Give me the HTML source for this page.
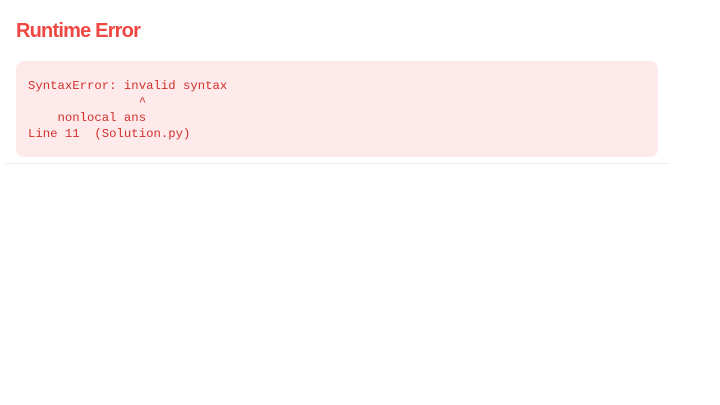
<!DOCTYPE html>
<html><head><style>
body{margin:0;background:#fff;width:720px;height:405px;overflow:hidden;font-family:"Liberation Sans",sans-serif}
h1{position:absolute;left:16px;top:20px;margin:0;font-size:20px;font-weight:bold;color:#ef4743;letter-spacing:-0.8px}
.box{position:absolute;left:16px;top:61px;width:642px;height:96px;background:#feeaea;border-radius:8px}
pre{position:absolute;left:28px;top:78px;margin:0;font-family:"Liberation Mono",monospace;font-size:12.3px;line-height:16px;color:#d0312d}
.hr{position:absolute;left:5px;top:163px;width:663px;height:1px;background:#ececec}
</style></head><body>
<h1>Runtime Error</h1>
<div class="box"></div>
<pre>SyntaxError: invalid syntax
               ^
    nonlocal ans
Line 11  (Solution.py)</pre>
<div class="hr"></div>
</body></html>
